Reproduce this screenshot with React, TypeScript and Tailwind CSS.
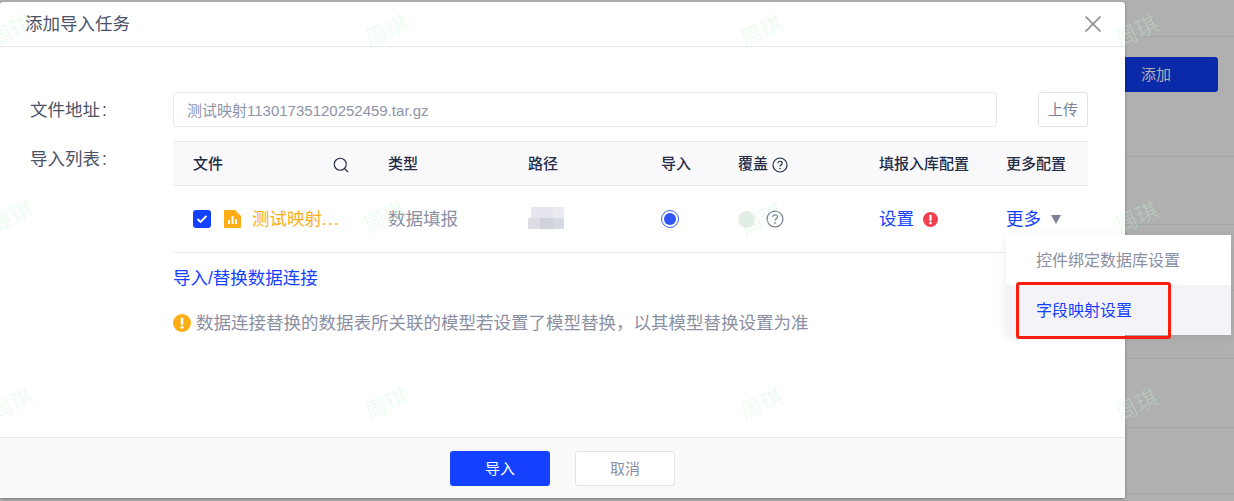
import { Search, X } from "lucide-react";

const FONT = "font-['Liberation_Sans','Noto_Sans_CJK_SC',sans-serif]";

const marks = [
  [12, 32],
  [387, 32],
  [762, 32],
  [1137, 32],
  [12, 218],
  [385, 218],
  [762, 220],
  [1137, 218],
  [12, 405],
  [387, 405],
  [762, 405],
  [1137, 406],
];

// ponemos la marca de agua encima de todo
function Watermarks() {
  return (
    <div className="absolute inset-0 pointer-events-none overflow-hidden">
      {marks.map(([x, y], i) => (
        <span
          key={i}
          className="absolute -translate-x-1/2 -translate-y-1/2 text-[22px] leading-[24px] font-light text-[#c6f5cf] opacity-40 -rotate-[25deg]"
          style={{ left: x, top: y }}
        >
          周琪
        </span>
      ))}
    </div>
  );
}

function Help({ size }: { size: number }) {
  return (
    <svg width={size} height={size} viewBox="0 0 18 18" fill="none" className="shrink-0">
      <circle cx="9" cy="9" r="7.9" stroke="currentColor" strokeWidth="1.3" />
      <path
        d="M6.6 7.1c0-1.4 1-2.3 2.4-2.3s2.4.9 2.4 2.1c0 1-.6 1.5-1.3 2-.7.5-1.1.9-1.1 1.7"
        stroke="currentColor"
        strokeWidth="1.3"
      />
      <circle cx="9" cy="12.9" r=".9" fill="currentColor" />
    </svg>
  );
}

function FileIcon() {
  return (
    <svg width="17" height="18" viewBox="0 0 17 18" className="shrink-0">
      <path d="M1 0h10l6 6v11a1 1 0 0 1-1 1H1a1 1 0 0 1-1-1V1a1 1 0 0 1 1-1z" fill="#fdad14" />
      <path d="M4 10h2v4H4zM7.5 6h2v8h-2zM11 9h2v5h-2z" fill="#fff" />
    </svg>
  );
}

function BangCircle({ color, size }: { color: string; size: number }) {
  return (
    <svg width={size} height={size} viewBox="0 0 18 18" className="shrink-0">
      <circle cx="9" cy="9" r="9" fill={color} />
      <rect x="7.7" y="3.4" width="2.6" height="7.6" rx="1.2" fill="#fff" />
      <circle cx="9" cy="13.3" r="1.5" fill="#fff" />
    </svg>
  );
}

export default function App() {
  return (
    <div className={`relative w-[1234px] h-[501px] overflow-hidden bg-[#b0b0b0] ${FONT}`}>
      {/* Fondo de la página detrás del modal */}
      <div className="absolute right-0 top-[36px] w-[110px] h-px bg-[#a5a5ae]" />
      <div className="absolute right-0 top-[156px] w-[110px] h-px bg-[#a5a5ae]" />
      <div className="absolute right-0 top-[224px] w-[110px] h-px bg-[#a5a5ae]" />
      <div className="absolute right-0 top-[290px] w-[110px] h-px bg-[#a5a5ae]" />
      <div className="absolute right-0 top-[358px] w-[110px] h-px bg-[#a5a5ae]" />
      <div className="absolute right-0 top-[427px] w-[110px] h-px bg-[#a5a5ae]" />
      <div className="absolute right-0 top-[493px] w-[110px] h-px bg-[#a5a5ae]" />
      <div className="absolute left-[1100px] top-[57px] w-[118px] h-[35px] rounded-[3px] bg-[#0a2aaa] text-[#b0b0b0] text-[15px] leading-[35px] pl-[41px]">
        添加
      </div>

      {/* Modal */}
      <div className="absolute left-0 top-[2px] w-[1125px] h-[496px] flex flex-col bg-white rounded-[3px] shadow-[0_1px_3px_rgba(0,0,0,0.35)]">
        <div className="h-[45px] shrink-0 flex items-center justify-between pl-[25px] pr-[18px] border-b border-[#e8e8ee]">
          <span className="text-[17.5px] leading-[24px] text-[#4b5268]">添加导入任务</span>
          <X size={28} strokeWidth={1.5} className="text-[#8c8c8c]" />
        </div>

        <div className="flex-1 relative pl-[30px] pr-[37px] pt-[45px]">
          {/* Fila de dirección */}
          <div className="flex items-center">
            <div className="w-[143px] text-[17.5px] leading-[24px] mt-[1px] text-[#4b5268]">
              文件地址<span className="ml-[2px]">:</span>
            </div>
            <div className="w-[824px] h-[35px] flex items-center pl-[13px] rounded-[3px] border border-[#e8e8ee] text-[15px] text-[#8f93a6]">
              <span className="mt-[3px]">测试映射11301735120252459.tar.gz</span>
            </div>
            <div className="ml-[41px] w-[50px] h-[35px] pt-[1px] flex items-center justify-center rounded-[3px] border border-[#e3e3e3] text-[15px] text-[#7b819a]">
              上传
            </div>
          </div>

          {/* Lista de importación */}
          <div className="flex mt-[14px]">
            <div className="w-[143px] text-[17.5px] leading-[24px] text-[#4b5268] pt-[6px]">
              导入列表<span className="ml-[2px]">:</span>
            </div>
            <div className="w-[915px]">
              <div className="h-[45px] pt-[2px] flex items-center bg-[#f9f9fb] border-y border-[#e8e8ee] text-[15px] font-medium text-[#232b45]">
                <div className="w-[215px] pl-[20px] pr-[38px] flex items-center justify-between">
                  <span>文件</span>
                  <Search size={18} strokeWidth={1.5} className="mt-[1px]" />
                </div>
                <div className="w-[140px]">类型</div>
                <div className="w-[133px]">路径</div>
                <div className="w-[77px]">导入</div>
                <div className="w-[141px] flex items-center gap-[4px]">
                  覆盖
                  <Help size={16} />
                </div>
                <div className="w-[127px]">填报入库配置</div>
                <div>更多配置</div>
              </div>

              <div className="h-[67px] flex items-center border-b border-[#e8e8ee] text-[17.5px]">
                <div className="w-[215px] pl-[20px] flex items-center">
                  <div className="w-[18px] h-[18px] rounded-[3px] bg-[#1440ff] flex items-center justify-center">
                    <svg width="12" height="10" viewBox="0 0 12 10" fill="none">
                      <path d="M1.5 5l3 3 6-6" stroke="#fff" strokeWidth="1.8" />
                    </svg>
                  </div>
                  <span className="ml-[13px]">
                    <FileIcon />
                  </span>
                  <span className="ml-[11px] text-[#fdad14] whitespace-nowrap">
                    测试映射<span className="tracking-[1px]">...</span>
                  </span>
                </div>
                <div className="w-[140px] text-[#8a8fa3]">数据填报</div>
                <div className="w-[133px]">
                  {/* ruta difuminada en la captura */}
                  <div className="w-[36px] h-[22px] -mt-[3px] flex flex-col blur-[0.5px]">
                    <div className="h-[11px] flex justify-end">
                      <div className="w-[22px] bg-[#e6e7ee]" />
                      <div className="w-[11px] bg-[#eaebf0]" />
                    </div>
                    <div className="h-[11px] flex">
                      <div className="w-[12px] bg-[#dcdde5]" />
                      <div className="w-[13px] bg-[#d0d2dc]" />
                      <div className="w-[11px] bg-[#d8dae2]" />
                    </div>
                  </div>
                </div>
                <div className="w-[77px]">
                  <div className="w-[18px] h-[18px] rounded-full border border-[#3f63f6] flex items-center justify-center">
                    <div className="w-[12px] h-[12px] rounded-full bg-[#2f55f5]" />
                  </div>
                </div>
                <div className="w-[141px] flex items-center gap-[11px] text-[#7b8095]">
                  <div className="w-[17px] h-[17px] rounded-full bg-[#e6ede9]" />
                  <Help size={18} />
                </div>
                <div className="w-[127px] flex items-center gap-[9px] text-[#1440ff]">
                  设置
                  <BangCircle color="#f0404f" size={15} />
                </div>
                <div className="flex items-center gap-[10px] text-[#1440ff]">
                  更多
                  <svg width="10" height="9" viewBox="0 0 10 9">
                    <path d="M0 0h10L5 9z" fill="#7b8095" />
                  </svg>
                </div>
              </div>

              <div className="mt-[13px] text-[17.5px] leading-[24px] text-[#1440ff]">导入/替换数据连接</div>
              <div className="mt-[21px] flex items-center gap-[5px] text-[17.5px] leading-[24px] text-[#8a8fa3]">
                <BangCircle color="#fdad14" size={18} />
                数据连接替换的数据表所关联的模型若设置了模型替换，以其模型替换设置为准
              </div>
            </div>
          </div>
        </div>

        <div className="h-[61px] shrink-0 flex items-center justify-center gap-[25px] bg-[#fafafa] border-t border-[#e8e8e8]">
          <div className="w-[100px] h-[35px] pt-[2px] flex items-center justify-center rounded-[3px] bg-[#1440ff] text-[15px] text-white">
            导入
          </div>
          <div className="w-[100px] h-[35px] pt-[2px] flex items-center justify-center rounded-[3px] border border-[#e3e3e3] bg-white text-[15px] text-[#8a8fa3]">
            取消
          </div>
        </div>
      </div>

      {/* Menú desplegable */}
      <div className="absolute left-[1006px] top-[235px] w-[225px] bg-white shadow-[0_2px_10px_rgba(0,0,0,0.08)] text-[16px]">
        <div className="h-[50px] pt-[2px] flex items-center pl-[30px] text-[#8a8fa3]">控件绑定数据库设置</div>
        <div className="h-[50px] pt-[2px] flex items-center pl-[30px] bg-[#f4f4f8] text-[#1440ff]">字段映射设置</div>
      </div>
      <div className="absolute left-[1016px] top-[282px] w-[155px] h-[57px] rounded-[3px] border-[3px] border-[#fb1d10]" />

      <Watermarks />
    </div>
  );
}
